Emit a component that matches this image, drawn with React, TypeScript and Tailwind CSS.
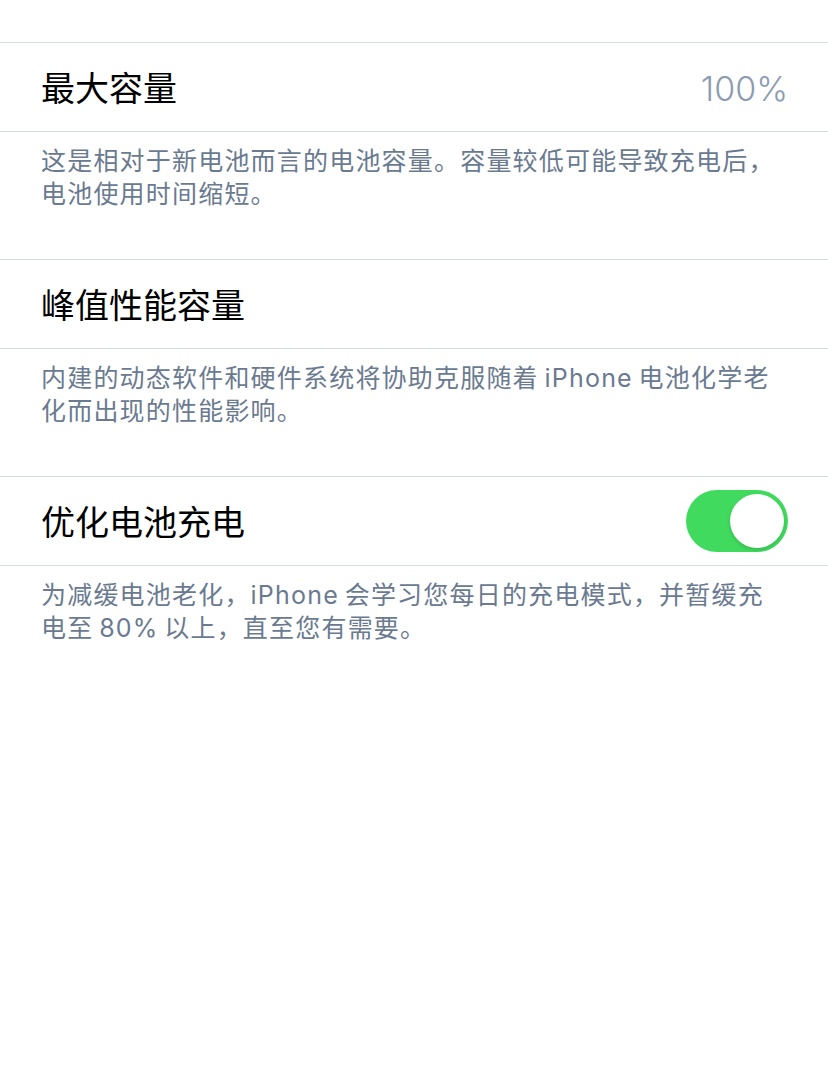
import type { ReactNode } from "react";

const FONT = "font-['Inter','Noto_Sans_CJK_SC',sans-serif]";
// thin space between Latin words and CJK text
const THIN = "\u2009";

function Row({ title, children }: { title: string; children?: ReactNode }) {
  return (
    <div className="flex h-[89px] items-center justify-between border-b border-[#d3dbe5] pl-[41px] pr-[40px]">
      <span className="pt-[3px] text-[34px] leading-none text-black">{title}</span>
      {children}
    </div>
  );
}

function Note({ text, last }: { text: string; last?: boolean }) {
  return (
    <p
      className={`pl-[41px] pr-[48px] pt-[13px] text-[25px] leading-[33px] tracking-[1.2px] text-[#6a7a90] ${
        last ? "" : "border-b border-[#d3dbe5] pb-[48px]"
      }`}
    >
      {text}
    </p>
  );
}

function Toggle({ on }: { on: boolean }) {
  return (
    <div
      className={`flex h-[62px] w-[102px] items-center rounded-full p-[4px] ${
        on ? "justify-end bg-[#40db5e]" : "justify-start bg-[#e5e5ea]"
      }`}
    >
      <div className="h-[54px] w-[54px] rounded-full bg-white shadow-[0_2px_4px_rgba(0,0,0,0.15)]" />
    </div>
  );
}

export default function App() {
  return (
    <div className={`min-h-[1074px] w-full bg-white ${FONT}`}>
      <div className="h-[43px] border-b border-[#d3dbe5]" />

      <Row title="最大容量">
        <span className="pt-[3px] text-[34px] font-light leading-none text-[#8b9bb0]">100%</span>
      </Row>
      <Note text="这是相对于新电池而言的电池容量。容量较低可能导致充电后，电池使用时间缩短。" />

      <Row title="峰值性能容量" />
      <Note
        text={`内建的动态软件和硬件系统将协助克服随着${THIN}iPhone${THIN}电池化学老化而出现的性能影响。`}
      />

      <Row title="优化电池充电">
        <Toggle on />
      </Row>
      <Note
        last
        text={`为减缓电池老化，iPhone${THIN}会学习您每日的充电模式，并暂缓充电至${THIN}80%${THIN}以上，直至您有需要。`}
      />
    </div>
  );
}
